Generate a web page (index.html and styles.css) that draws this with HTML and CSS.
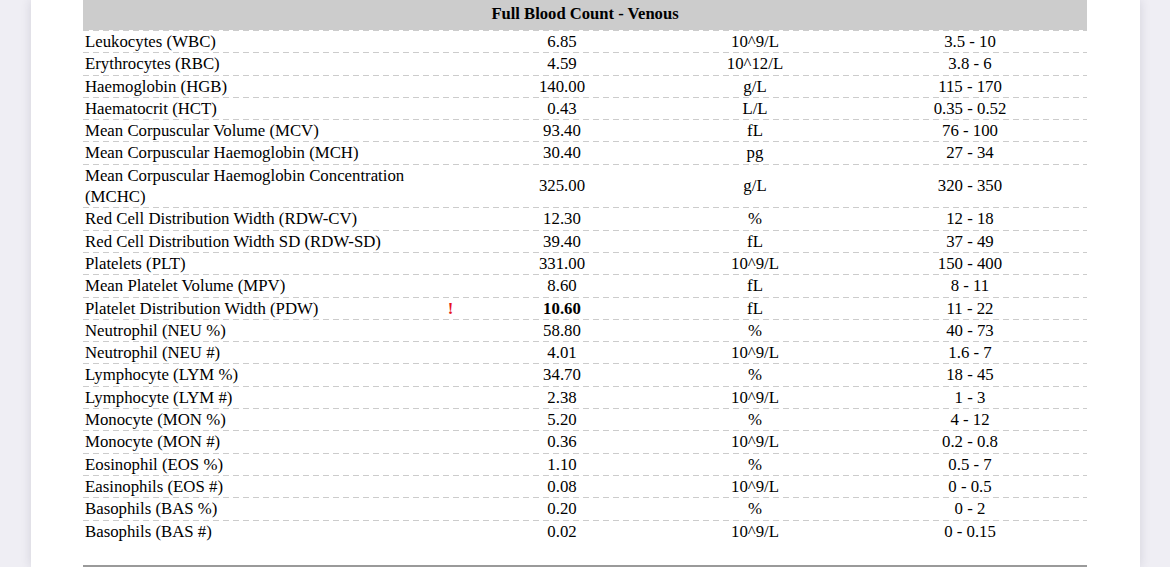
FILE: index.html
```html
<!DOCTYPE html>
<html lang="en">
<head>
<meta charset="utf-8">
<title>Full Blood Count - Venous</title>
<link rel="stylesheet" href="styles.css">
</head>
<body>
<div class="page">
  <div class="report">
    <div class="title">Full Blood Count - Venous</div>
    <div class="rows">
      <div class="row"><div class="name">Leukocytes (WBC)</div><div class="flag"></div><div class="val">6.85</div><div class="unit">10^9/L</div><div class="range">3.5 - 10</div></div>
      <div class="row"><div class="name">Erythrocytes (RBC)</div><div class="flag"></div><div class="val">4.59</div><div class="unit">10^12/L</div><div class="range">3.8 - 6</div></div>
      <div class="row"><div class="name">Haemoglobin (HGB)</div><div class="flag"></div><div class="val">140.00</div><div class="unit">g/L</div><div class="range">115 - 170</div></div>
      <div class="row"><div class="name">Haematocrit (HCT)</div><div class="flag"></div><div class="val">0.43</div><div class="unit">L/L</div><div class="range">0.35 - 0.52</div></div>
      <div class="row"><div class="name">Mean Corpuscular Volume (MCV)</div><div class="flag"></div><div class="val">93.40</div><div class="unit">fL</div><div class="range">76 - 100</div></div>
      <div class="row"><div class="name">Mean Corpuscular Haemoglobin (MCH)</div><div class="flag"></div><div class="val">30.40</div><div class="unit">pg</div><div class="range">27 - 34</div></div>
      <div class="row"><div class="name">Mean Corpuscular Haemoglobin Concentration (MCHC)</div><div class="flag"></div><div class="val">325.00</div><div class="unit">g/L</div><div class="range">320 - 350</div></div>
      <div class="row"><div class="name">Red Cell Distribution Width (RDW-CV)</div><div class="flag"></div><div class="val">12.30</div><div class="unit">%</div><div class="range">12 - 18</div></div>
      <div class="row"><div class="name">Red Cell Distribution Width SD (RDW-SD)</div><div class="flag"></div><div class="val">39.40</div><div class="unit">fL</div><div class="range">37 - 49</div></div>
      <div class="row"><div class="name">Platelets (PLT)</div><div class="flag"></div><div class="val">331.00</div><div class="unit">10^9/L</div><div class="range">150 - 400</div></div>
      <div class="row"><div class="name">Mean Platelet Volume (MPV)</div><div class="flag"></div><div class="val">8.60</div><div class="unit">fL</div><div class="range">8 - 11</div></div>
      <div class="row"><div class="name">Platelet Distribution Width (PDW)</div><div class="flag">!</div><div class="val abnormal">10.60</div><div class="unit">fL</div><div class="range">11 - 22</div></div>
      <div class="row"><div class="name">Neutrophil (NEU %)</div><div class="flag"></div><div class="val">58.80</div><div class="unit">%</div><div class="range">40 - 73</div></div>
      <div class="row"><div class="name">Neutrophil (NEU #)</div><div class="flag"></div><div class="val">4.01</div><div class="unit">10^9/L</div><div class="range">1.6 - 7</div></div>
      <div class="row"><div class="name">Lymphocyte (LYM %)</div><div class="flag"></div><div class="val">34.70</div><div class="unit">%</div><div class="range">18 - 45</div></div>
      <div class="row"><div class="name">Lymphocyte (LYM #)</div><div class="flag"></div><div class="val">2.38</div><div class="unit">10^9/L</div><div class="range">1 - 3</div></div>
      <div class="row"><div class="name">Monocyte (MON %)</div><div class="flag"></div><div class="val">5.20</div><div class="unit">%</div><div class="range">4 - 12</div></div>
      <div class="row"><div class="name">Monocyte (MON #)</div><div class="flag"></div><div class="val">0.36</div><div class="unit">10^9/L</div><div class="range">0.2 - 0.8</div></div>
      <div class="row"><div class="name">Eosinophil (EOS %)</div><div class="flag"></div><div class="val">1.10</div><div class="unit">%</div><div class="range">0.5 - 7</div></div>
      <div class="row"><div class="name">Easinophils (EOS #)</div><div class="flag"></div><div class="val">0.08</div><div class="unit">10^9/L</div><div class="range">0 - 0.5</div></div>
      <div class="row"><div class="name">Basophils (BAS %)</div><div class="flag"></div><div class="val">0.20</div><div class="unit">%</div><div class="range">0 - 2</div></div>
      <div class="row last"><div class="name">Basophils (BAS #)</div><div class="flag"></div><div class="val">0.02</div><div class="unit">10^9/L</div><div class="range">0 - 0.15</div></div>
    </div>
    <div class="rule"></div>
  </div>
</div>
</body>
</html>
```

FILE: styles.css
```css
html, body {
  margin: 0;
  padding: 0;
  height: 100%;
  overflow: hidden;
}
body {
  background: #efeef4;
  font-family: "Liberation Serif", "Times New Roman", serif;
  color: #000;
}
.page {
  margin-left: 31px;
  width: 1109px;
  min-height: 100%;
  background: #fff;
  box-shadow: 0 0 10px rgba(40, 40, 70, 0.14);
}
.report {
  margin-left: 52px;
  width: 1004px;
}
.title {
  height: 30px;
  line-height: 28px;
  text-align: center;
  font-weight: bold;
  font-size: 16.6px;
  background:
    repeating-linear-gradient(to right, #cccccc 0 6px, #ffffff 6px 10px) left bottom / 100% 1px no-repeat,
    #cccccc;
  border-bottom: 1px solid transparent;
  background-origin: border-box;
}
.row {
  display: grid;
  grid-template-columns: 357px 27px 190px 196px 234px;
  font-size: 16.8px;
  line-height: 21.3px;
  padding-bottom: 1px;
  background: repeating-linear-gradient(to right, #cccccc 0 6px, transparent 6px 10px) left bottom / 100% 1px no-repeat;
}
.row.last {
  background: none;
}
.name {
  padding-left: 2px;
  padding-right: 20px;
}
.flag {
  color: #e8141c;
  font-weight: bold;
  text-align: center;
  align-self: center;
  padding-right: 6px;
}
.val, .unit, .range {
  text-align: center;
  align-self: center;
}
.abnormal {
  font-weight: bold;
}
.rule {
  margin-top: 22px;
  height: 2px;
  background: #9a9a9a;
}
```
